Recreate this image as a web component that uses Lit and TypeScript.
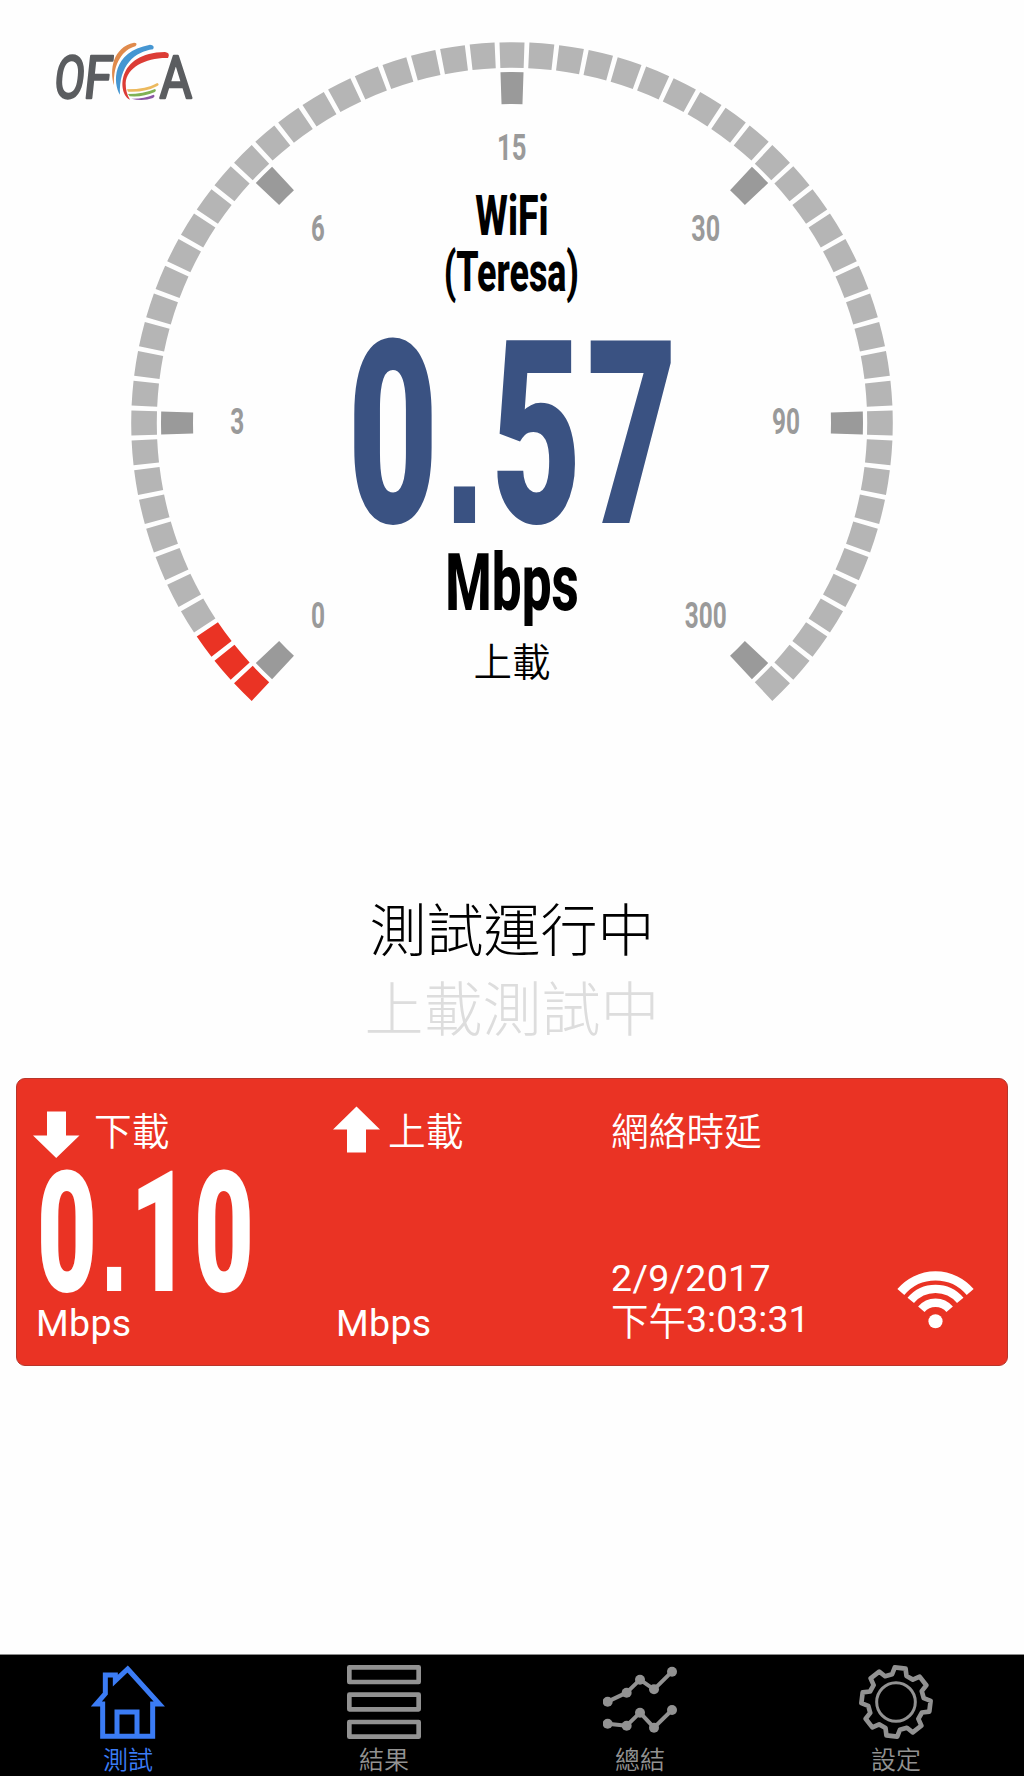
import { LitElement, html, svg, css } from "lit";
import { customElement, property } from "lit/decorators.js";

const FAMILY = '"Roboto", "Liberation Sans", sans-serif';
const POINT_FAMILY = '"Liberation Sans", sans-serif';
const ctx = document.createElement("canvas").getContext("2d")!;

/** Ink extents of a string in em. */
function ink(text: string, weight: number, family = FAMILY) {
  ctx.font = `${weight} 100px ${family}`;
  const m = ctx.measureText(text);
  return { left: -m.actualBoundingBoxLeft / 100, right: m.actualBoundingBoxRight / 100 };
}

/** Condensed text whose ink spans x0..x1 on the given baseline. */
function condensed(text: string, x0: number, x1: number, base: number, cap: number, cls: string, weight = 700) {
  const size = cap / 0.711;
  const m = ink(text, weight);
  const sx = (x1 - x0) / ((m.right - m.left) * size);
  return svg`<text class=${cls} font-size=${size} font-weight=${weight}
    transform="translate(${x0 - m.left * size * sx} ${base}) scale(${sx} 1)">${text}</text>`;
}

/** Condensed number with every digit centred on its own position and a square decimal point. */
function digits(text: string, centers: number[], width: number, base: number, cap: number, cls: string) {
  const weight = 900;
  const size = cap / 0.711;
  const zero = ink("0", weight);
  const sx = width / ((zero.right - zero.left) * size);
  const spans = [...text].map((c, i) => {
    const point = c === ".";
    const em = point ? size * 0.96 : size;
    const m = point ? ink(c, 700, POINT_FAMILY) : ink(c, weight);
    const x = centers[i] / sx - ((m.left + m.right) / 2) * em;
    return svg`<tspan class=${point ? "point" : "digit"} font-size=${em} x=${x}>${c}</tspan>`;
  });
  return svg`<text class=${cls} font-weight=${weight}
    transform="translate(0 ${base}) scale(${sx} 1)">${spans}</text>`;
}

function wedge(deg: number, inner: number, outer: number, half = 1.88) {
  const p = (r: number, d: number) => {
    const a = (d * Math.PI) / 180;
    return `${(512 + r * Math.sin(a)).toFixed(2)} ${(423 - r * Math.cos(a)).toFixed(2)}`;
  };
  return `M${p(outer, deg - half)}A${outer} ${outer} 0 0 1 ${p(outer, deg + half)}L${p(inner, deg + half)}A${inner} ${inner} 0 0 0 ${p(inner, deg - half)}Z`;
}

@customElement("speed-gauge")
class SpeedGauge extends LitElement {
  @property({ type: Number }) lit = 3;

  static styles = css`
    :host { display: block; }
    .dial { display: block; width: 1024px; height: 720px; }
    text { font-family: "Roboto", "Liberation Sans", sans-serif; }
    .point { font-family: "Liberation Sans", sans-serif; font-weight: 700; }
    .seg { fill: #b5b5b5; }
    .on { fill: #ea3324; }
    .tick { fill: #9a9a9a; }
    .mark { fill: #9a9a9a; }
    .value { fill: #3a5282; }
    .name { fill: #000; }
    .mode { font-family: "Noto Sans CJK TC", sans-serif; font-weight: 350; font-size: 38.5px; text-anchor: middle; }
    .brand { fill: #5b5d60; stroke: #5b5d60; stroke-width: 2.4; stroke-linejoin: round; }
  `;

  render() {
    const segs = Array.from({ length: 61 }, (_, i) => -135 + i * 4.5);
    const ticks = Array.from({ length: 7 }, (_, i) => -135 + i * 45);
    return html`<svg class="dial" viewBox="0 0 1024 720">
      <g transform="translate(9.2 0) skewX(-6)">
        ${condensed("O", 56, 81.5, 97.5, 42, "brand", 400)}
        ${condensed("F", 87.5, 110, 97.5, 42, "brand", 400)}
      </g>
      ${condensed("A", 160, 191.5, 97.5, 42, "brand", 400)}
      <g transform="translate(40 30) scale(.33333)">
        <path fill="#e08a4c" d="M282 38Q295 39 286 49C250 58 218 100 222 166C208 120 218 52 282 38Z" />
        <path fill="#4596d2" d="M330 44Q346 46 339 58C285 65 236 105 240 194C219 160 213 66 330 44Z" />
        <path fill="#dc3c35" d="M375 66Q392 68 384 84C320 82 259 112 257 160Q257 190 270 209C232 192 228 68 375 66Z" />
        <path fill="#ecb95e" d="M261 178Q320 178 352 159Q360 163 352 168Q315 188 264 185Z" />
        <path fill="#7fb254" d="M264 192Q310 192 345 177Q351 181 343 187Q310 202 269 199Z" />
        <path fill="#8a56a4" d="M274 206Q310 207 341 194Q347 198 339 204Q308 215 274 206Z" />
      </g>
      ${segs.map((d, i) => svg`<path class=${i < this.lit ? "on" : "seg"} d=${wedge(d, 355.2, 380.8)} />`)}
      ${ticks.map((d) => svg`<path class="tick" d=${wedge(d, 319, 351)} />`)}
      ${condensed("0", 312, 324, 628, 26.5, "mark")}
      ${condensed("3", 231, 243.2, 434, 26.5, "mark")}
      ${condensed("6", 312, 324, 240.5, 26.5, "mark")}
      ${condensed("15", 499, 525.5, 160.3, 26.5, "mark")}
      ${condensed("30", 692, 719, 240.5, 26.5, "mark")}
      ${condensed("90", 773, 799, 434, 26.5, "mark")}
      ${condensed("300", 685.5, 725.7, 628, 26.5, "mark")}
      ${condensed("WiFi", 475.7, 546.7, 235, 39.5, "name", 800)}
      ${condensed("(Teresa)", 445.8, 577.5, 290.7, 39.2, "name", 800)}
      ${digits("0.57", [393, 464, 535.7, 630.5], 78, 523.3, 181.5, "value")}
      ${condensed("Mbps", 448, 577, 609.5, 57, "name", 800)}
      <text class="mode" x="512" y="675.5">上載</text>
    </svg>`;
  }
}

@customElement("result-card")
class ResultCard extends LitElement {
  static styles = css`
    :host {
      display: grid;
      grid-template-columns: 300px 278px 1fr;
      box-sizing: border-box;
      height: 288px;
      margin: 0 16px;
      padding: 26px 33px 0 16px;
      border: 1px solid #b8352a;
      border-radius: 9px;
      background: #ea3324;
      color: #fff;
      font: 400 37.5px/42px "Roboto", "Noto Sans CJK TC", sans-serif;
    }
    .col { display: flex; flex-direction: column; }
    .head { display: flex; align-items: center; height: 53px; }
    .head svg { width: 47px; height: 53px; flex: none; fill: #fff; }
    .down { gap: 14px; }
    .up { gap: 8px; }
    .label { font-family: "Noto Sans CJK TC", sans-serif; font-weight: 350; font-size: 37.7px; padding-bottom: 5px; }
    .number { display: block; width: 260px; height: 136px; overflow: visible; }
    .number text { font-family: "Roboto", "Liberation Sans", sans-serif; fill: #fff; }
    .number .point { font-family: "Liberation Sans", sans-serif; font-weight: 700; }
    .unit { padding: 8px 0 0 3px; letter-spacing: 0.3px; }
    .foot { display: flex; justify-content: space-between; margin-top: 98.5px; }
    .when { display: grid; grid-template-rows: 41.5px 42px; letter-spacing: 0.3px; }
    .time { display: flex; align-items: center; letter-spacing: 0; }
    .half { font-family: "Noto Sans CJK TC", sans-serif; font-weight: 350; }
    .wifi { width: 77px; height: 58px; margin-top: 14.5px; fill: none; stroke: #fff; }
    .dot { fill: #fff; stroke: none; }
  `;

  render() {
    const arc = (r: number) => {
      const dx = r * Math.sin(0.87), dy = r * Math.cos(0.87);
      return `M${114 - dx} ${149 - dy}A${r} ${r} 0 0 1 ${114 + dx} ${149 - dy}`;
    };
    return html`
      <div class="col">
        <div class="head down">
          <svg viewBox="0 0 47 53"><path d="M14 6.500H33V30.500H46.500L23.200 53L0 30.500H14Z" /></svg>
          <span class="label">下載</span>
        </div>
        <svg class="number" viewBox="33 1158 260 136">
          ${digits("0.10", [67, 113.7, 155.5, 224], 52, 1290.5, 120, "n")}
        </svg>
        <span class="unit">Mbps</span>
      </div>
      <div class="col">
        <div class="head up">
          <svg viewBox="0 0 47 53"><path d="M23.500 1.500L47 24.500H33V47.500H14V24.500H0Z" /></svg>
          <span class="label">上載</span>
        </div>
        <div class="number"></div>
        <span class="unit">Mbps</span>
      </div>
      <div class="col">
        <div class="head"><span class="label">網絡時延</span></div>
        <div class="foot">
          <div class="when"><span>2/9/2017</span><span class="time"><span class="half">下午</span>3:03:31</span></div>
          <svg class="wifi" viewBox="0 0 228 172">
            <path stroke-width="27" d=${arc(134.5)} />
            <path stroke-width="25" d=${arc(96)} />
            <path stroke-width="25" d=${arc(55)} />
            <circle class="dot" cx="114" cy="149" r="21" />
          </svg>
        </div>
      </div>`;
  }
}

function gearPath() {
  const pts: string[] = [];
  for (let k = 0; k < 8; k++) {
    for (const [off, r] of [[-9, 104], [9, 104], [15, 84], [30, 84]]) {
      const a = ((7 + k * 45 + off) * Math.PI) / 180;
      pts.push(`${(111 + r * Math.sin(a)).toFixed(1)} ${(111 - r * Math.cos(a)).toFixed(1)}`);
    }
  }
  return `M${pts.join("L")}Z`;
}

const chart = [
  [[14, 110], [71, 83], [111, 44], [153, 73], [207, 20]],
  [[14, 176], [71, 182], [111, 143], [153, 188], [207, 135]],
];

@customElement("tab-bar")
class TabBar extends LitElement {
  static styles = css`
    :host {
      display: flex;
      box-sizing: border-box;
      height: 122px;
      border-top: 1px solid #8b8b8b;
      background: #000;
      color: #929292;
    }
    .tab { flex: 1; display: flex; flex-direction: column; align-items: center; padding-top: 10px; }
    .active { color: #3b7cf5; }
    .icon { width: 74px; height: 74px; fill: none; stroke: currentColor; stroke-linejoin: round; }
    .dot { fill: currentColor; stroke: none; }
    .label { font: 350 25px/30px "Noto Sans CJK TC", sans-serif; margin-top: 3.500px; }
  `;

  render() {
    const tabs = [
      ["測試", svg`<g stroke-width="15" stroke-linejoin="miter"><path d="M110 12L205 117H185V214H35V117H16L43 86V30H73V47Z" /><path d="M78 214V141H138V214" /></g>`],
      ["結果", svg`<g stroke-width="14">${[7, 89, 171].map((y) => svg`<rect x="7" y=${y} width="208" height="44" />`)}</g>`],
      ["總結", svg`${chart.map((l) => svg`<polyline stroke-width="12" points=${l.join(" ")} />${l.map(([x, y]) => svg`<circle class="dot" cx=${x} cy=${y} r="15" />`)}`)}`],
      ["設定", svg`<path stroke-width="14" d=${gearPath()} /><circle cx="111" cy="111" r="58" stroke-width="9" />`],
    ];
    return tabs.map(([label, icon], i) => html`
      <div class=${i === 0 ? "tab active" : "tab"}>
        <svg class="icon" viewBox="0 0 222 222">${icon}</svg>
        <span class="label">${label}</span>
      </div>`);
  }
}

@customElement("app-root")
class AppRoot extends LitElement {
  static styles = css`
    :host {
      display: flex;
      flex-direction: column;
      height: 1776px;
      overflow: hidden;
      background: #fefefe;
    }
    .status {
      display: flex;
      flex-direction: column;
      align-items: center;
      box-sizing: border-box;
      height: 358px;
      padding-top: 167px;
      font-family: "Noto Sans CJK TC", sans-serif;
      font-weight: 300;
    }
    .primary { font-size: 57px; line-height: 79px; color: #000; }
    .secondary { font-size: 59px; line-height: 79px; color: #ddd; }
    .space { flex: 1; }
  `;

  render() {
    return html`
      <speed-gauge></speed-gauge>
      <div class="status">
        <div class="primary">測試運行中</div>
        <div class="secondary">上載測試中</div>
      </div>
      <result-card></result-card>
      <div class="space"></div>
      <tab-bar></tab-bar>`;
  }
}
